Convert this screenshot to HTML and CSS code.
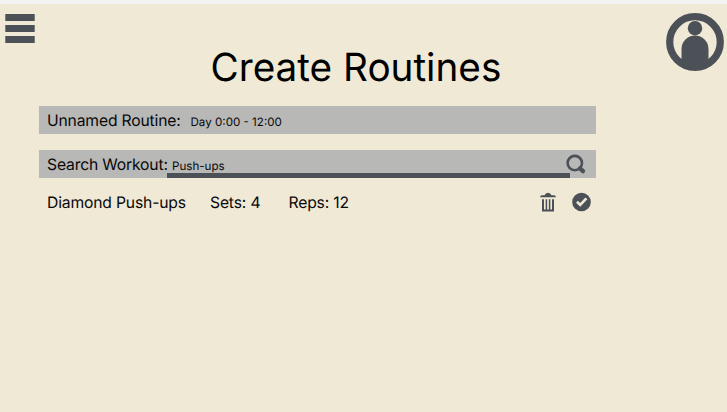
FILE: index.html
```html
<!DOCTYPE html>
<html lang="en">
<head>
<meta charset="utf-8">
<title>Create Routines</title>
<link rel="stylesheet" href="styles.css">
</head>
<body>
<header class="header">
  <svg class="menu" width="30" height="30" viewBox="0 0 30 30"><path d="M.3 0h29.400v7H.3zM.3 11h29.400v7H.3zM.3 22h29.400v7H.3z"/></svg>
  <h1 class="title">Create Routines</h1>
  <svg class="avatar" width="58" height="58" viewBox="0 0 58 58"><circle cx="29" cy="29" r="25.3" fill="none" stroke="#4b5157" stroke-width="7.2"/><circle cx="29" cy="15.2" r="7.2"/><path d="M15.500 51V36a13.500 13.500 0 0 1 27 0v15L29 56z"/></svg>
</header>
<main class="content">
  <section class="bar">
    <span class="label name">Unnamed Routine:</span>
    <span class="value">Day 0:00 - 12:00</span>
  </section>
  <section class="bar search">
    <span class="label query">Search Workout:</span>
    <div class="field"><span class="value">Push-ups</span></div>
    <svg class="magnifier" width="26" height="28" viewBox="570 150 26 28"><circle cx="574.800" cy="163.100" r="7.200" fill="none" stroke="#4b5157" stroke-width="2.600"/><path d="M580 168.400l3 2.700" fill="none" stroke="#4b5157" stroke-width="4.300" stroke-linecap="round"/></svg>
  </section>
  <section class="workout">
    <span class="label exercise">Diamond Push-ups</span>
    <span class="label sets">Sets: 4</span>
    <span class="label reps">Reps: 12</span>
    <svg class="trash" width="16" height="20" viewBox="0 0 16 20"><path d="M0 5.200q.2-1.900 2-1.900h2.500Q5.500 .8 8 .8t3.500 2.500H14q1.800 0 2 1.900z"/><path d="M3 7.200v11.200h10V7.200" fill="none" stroke="#4b5157" stroke-width="2"/><path d="M6.400 7.200v11M9.600 7.200v11" fill="none" stroke="#4b5157" stroke-width="1.500"/></svg>
    <svg class="check" width="19" height="20" viewBox="0 0 19 20"><circle cx="9.500" cy="10" r="9.300"/><path d="M5 9.800l3.200 3.100 6.200-6.500" fill="none" stroke="#f0e9d6" stroke-width="2.700"/></svg>
  </section>
</main>
</body>
</html>
```

FILE: styles.css
```css
* { box-sizing: border-box; }
body {
  margin: 0;
  height: 412px;
  overflow: hidden;
  border-top: 4px solid #f3f3f3;
  background: #f0e9d6;
  color: #080808;
  font-family: Inter, sans-serif;
  text-rendering: geometricPrecision;
}
svg { display: block; flex: none; overflow: visible; fill: #4b5157; }
.header {
  display: flex;
  align-items: flex-start;
  height: 102px;
  padding: 9px 3px 0 5px;
}
.menu { margin-top: 1px; }
.title {
  width: 300px;
  margin: 31px 0 0 175.500px;
  color: #000;
  font-size: 38.700px;
  line-height: 48px;
  font-weight: 400;
  white-space: nowrap;
}
.avatar { margin-left: auto; }
.content { width: 557px; margin-left: 39px; }
.bar {
  display: flex;
  height: 28.400px;
  margin-bottom: 15.600px;
  padding-left: 8px;
  background: #b8b8b7;
  line-height: 29px;
  white-space: nowrap;
}
.label { flex: none; font-size: 15.700px; letter-spacing: -0.170px; }
.value { font-size: 11.600px; line-height: 32px; }
.name { width: 143.500px; }
.search { margin-bottom: 14px; }
.query { width: 120px; }
.field {
  width: 403px;
  height: 28px;
  padding-left: 5px;
  border-bottom: 5px solid #4b5157;
}
.field .value { display: block; line-height: 32px; }
.workout {
  display: flex;
  height: 20px;
  padding-left: 8px;
  line-height: 21px;
  white-space: nowrap;
}
.exercise { width: 163px; }
.sets { width: 78.500px; }
.reps { width: 251px; }
.check { margin-left: 16px; }
```
